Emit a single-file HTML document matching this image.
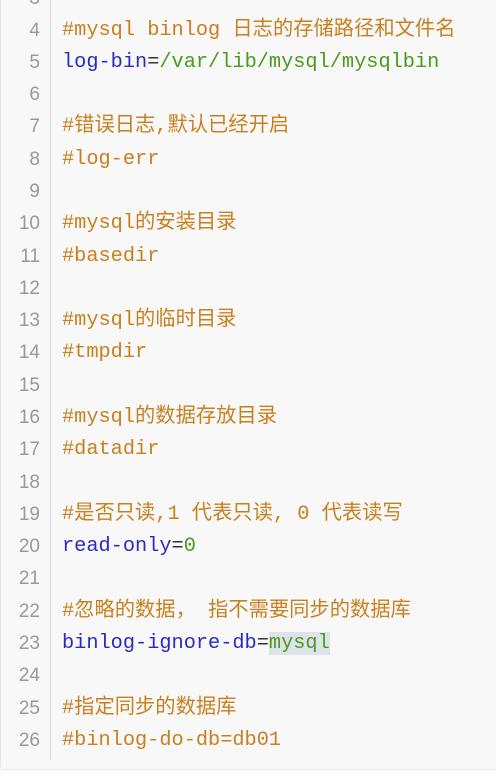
<!DOCTYPE html>
<html><head><meta charset="utf-8"><style>
body{margin:0;width:496px;height:778px;background:#fff;overflow:hidden;font-family:"Liberation Mono","Noto Sans CJK SC",monospace;}
.box{position:absolute;left:0;top:-20px;width:520px;height:788px;background:#f8f8f8;border:1px solid #e6e6e6;border-radius:4px;}
.gut{position:absolute;left:50px;top:-20px;height:780px;border-left:1px solid #ddd;}
.l{position:absolute;left:0;height:32px;line-height:32px;font-size:20.3px;white-space:pre;}
.n{position:absolute;left:0;width:40px;text-align:right;color:#999;font-family:"Liberation Sans",sans-serif;font-size:19px;}
.c{position:absolute;left:62px;}
.o{color:#c8801e}.b{color:#2a2ac8}.g{color:#4c9a1c}.k{color:#333}
.sel{background:#dde3ea}
</style></head><body>
<div class="box"></div><div class="gut"></div>
<div class="l" style="top:-17px"><span class="n">3</span></div>
<div class="l" style="top:15px"><span class="n">4</span><span class="c o">#mysql binlog 日志的存储路径和文件名</span></div>
<div class="l" style="top:47px"><span class="n">5</span><span class="c"><span class="b">log-bin</span><span class="k">=</span><span class="g">/var/lib/mysql/mysqlbin</span></span></div>
<div class="l" style="top:79px"><span class="n">6</span></div>
<div class="l" style="top:111px"><span class="n">7</span><span class="c o">#错误日志,默认已经开启</span></div>
<div class="l" style="top:144px"><span class="n">8</span><span class="c o">#log-err</span></div>
<div class="l" style="top:176px"><span class="n">9</span></div>
<div class="l" style="top:208px"><span class="n">10</span><span class="c o">#mysql的安装目录</span></div>
<div class="l" style="top:241px"><span class="n">11</span><span class="c o">#basedir</span></div>
<div class="l" style="top:273px"><span class="n">12</span></div>
<div class="l" style="top:305px"><span class="n">13</span><span class="c o">#mysql的临时目录</span></div>
<div class="l" style="top:337px"><span class="n">14</span><span class="c o">#tmpdir</span></div>
<div class="l" style="top:370px"><span class="n">15</span></div>
<div class="l" style="top:402px"><span class="n">16</span><span class="c o">#mysql的数据存放目录</span></div>
<div class="l" style="top:434px"><span class="n">17</span><span class="c o">#datadir</span></div>
<div class="l" style="top:467px"><span class="n">18</span></div>
<div class="l" style="top:499px"><span class="n">19</span><span class="c o">#是否只读,1 代表只读, 0 代表读写</span></div>
<div class="l" style="top:531px"><span class="n">20</span><span class="c"><span class="b">read-only</span><span class="k">=</span><span class="g">0</span></span></div>
<div class="l" style="top:563px"><span class="n">21</span></div>
<div class="l" style="top:596px"><span class="n">22</span><span class="c o">#忽略的数据， 指不需要同步的数据库</span></div>
<div class="l" style="top:628px"><span class="n">23</span><span class="c"><span class="b">binlog-ignore-db</span><span class="k">=</span><span class="g sel">mysql</span></span></div>
<div class="l" style="top:660px"><span class="n">24</span></div>
<div class="l" style="top:693px"><span class="n">25</span><span class="c o">#指定同步的数据库</span></div>
<div class="l" style="top:725px"><span class="n">26</span><span class="c o">#binlog-do-db=db01</span></div>
</body></html>
